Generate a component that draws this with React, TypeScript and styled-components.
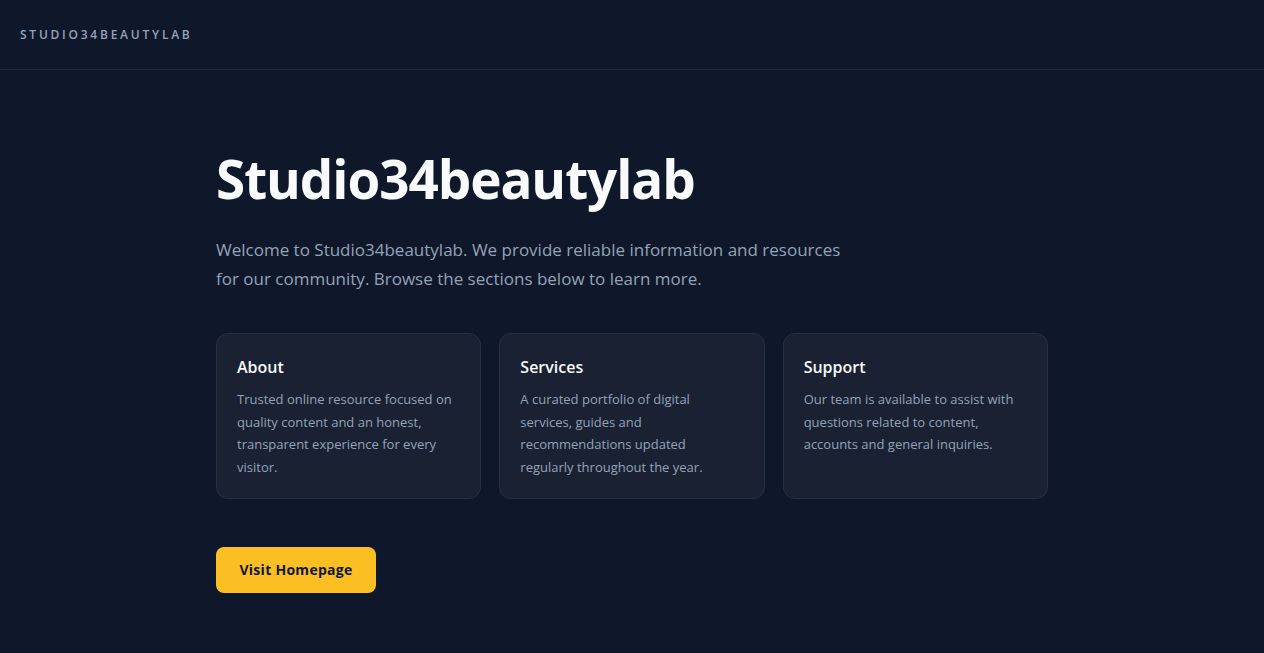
import React from "react";
import styled, { createGlobalStyle } from "styled-components";

const GlobalStyle = createGlobalStyle`
  html, body {
    margin: 0;
    padding: 0;
    background: #0f172a;
  }
  body {
    font-family: "Open Sans", "Noto Sans", sans-serif;
    color: #e2e8f0;
    -webkit-font-smoothing: antialiased;
  }
  * {
    box-sizing: border-box;
  }
`;

type Section = {
  title: string;
  text: string;
};

const sections: Section[] = [
  {
    title: "About",
    text: "Trusted online resource focused on quality content and an honest, transparent experience for every visitor.",
  },
  {
    title: "Services",
    text: "A curated portfolio of digital services, guides and recommendations updated regularly throughout the year.",
  },
  {
    title: "Support",
    text: "Our team is available to assist with questions related to content, accounts and general inquiries.",
  },
];

const App: React.FC = () => {
  return (
    <Page>
      <GlobalStyle />
      <TopBar>
        <Brand>Studio34beautylab</Brand>
      </TopBar>
      <Main>
        <Title>Studio34beautylab</Title>
        <Lead>
          Welcome to Studio34beautylab. We provide reliable information and
          resources for our community. Browse the sections below to learn more.
        </Lead>
        <CardGrid>
          {sections.map((s) => (
            <Card key={s.title}>
              <CardTitle>{s.title}</CardTitle>
              <CardText>{s.text}</CardText>
            </Card>
          ))}
        </CardGrid>
        <CtaButton href="#">Visit Homepage</CtaButton>
      </Main>
    </Page>
  );
};

const Page = styled.div`
  min-height: 756px;
  display: flex;
  flex-direction: column;
`;

const TopBar = styled.header`
  height: 70px;
  display: flex;
  align-items: center;
  padding: 0 20px;
  border-bottom: 1px solid #1e293b;
`;

const Brand = styled.div`
  font-size: 12px;
  font-weight: 600;
  letter-spacing: 0.23em;
  text-transform: uppercase;
  color: #94a3b8;
`;

const Main = styled.main`
  width: 100%;
  max-width: 880px;
  margin: 0 auto;
  padding: 79px 24px 80px;
`;

const Title = styled.h1`
  margin: 0 0 25px;
  font-size: 53px;
  font-weight: 700;
  line-height: 1.15;
  letter-spacing: -0.02em;
  color: #f8fafc;
`;

const Lead = styled.p`
  margin: 0;
  max-width: 640px;
  font-size: 17px;
  line-height: 29px;
  color: #94a3b8;
`;

const CardGrid = styled.section`
  display: grid;
  grid-template-columns: repeat(3, 1fr);
  gap: 18px;
  margin-top: 40px;
`;

const Card = styled.article`
  min-height: 164px;
  padding: 22px 24px 20px 20px;
  background: #1a2132;
  border: 1px solid #263143;
  border-radius: 12px;
`;

const CardTitle = styled.h2`
  margin: 0 0 10px;
  font-size: 16px;
  font-weight: 600;
  line-height: 1.4;
  color: #f8fafc;
`;

const CardText = styled.p`
  margin: 0;
  font-size: 13px;
  line-height: 22.4px;
  color: #94a3b8;
`;

const CtaButton = styled.a`
  display: inline-flex;
  align-items: center;
  justify-content: center;
  margin-top: 48px;
  width: 160px;
  height: 46px;
  border-radius: 8px;
  background: #fbbf24;
  color: #0f172a;
  font-size: 14px;
  font-weight: 700;
  letter-spacing: 0.02em;
  text-decoration: none;
`;

export default App;
